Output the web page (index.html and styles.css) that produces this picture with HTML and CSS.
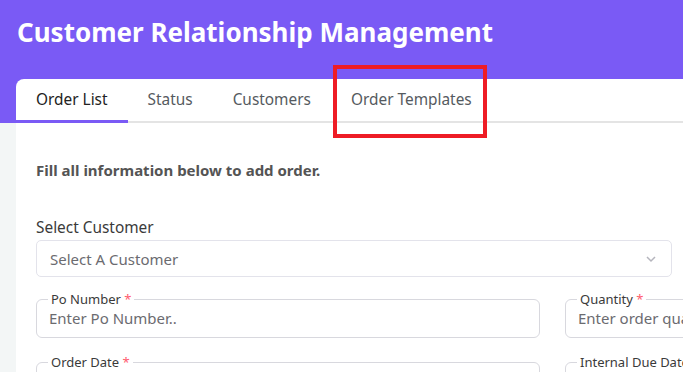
FILE: index.html
```html
<!DOCTYPE html>
<html lang="en">
<head>
    <meta charset="UTF-8">
    <meta name="viewport" content="width=device-width, initial-scale=1.0">
    <title>Customer Relationship Management</title>
    <link rel="stylesheet" href="styles.css">
</head>
<body>
    <h1 class="page-title">Customer Relationship Management</h1>

    <div class="card">
        <ul class="tabs">
            <li class="tab active">Order List</li>
            <li class="tab">Status</li>
            <li class="tab">Customers</li>
            <li class="tab highlight">Order Templates</li>
        </ul>

        <div class="card-body">
            <p class="intro">Fill all information below to add order.</p>

            <label class="label">Select Customer</label>
            <div class="select">
                <span>Select A Customer</span>
                <svg class="chevron" width="12" height="8" viewBox="0 0 12 8">
                    <path d="M2 2l4 4 4-4" fill="none" stroke="#b5b5bd" stroke-width="1.5"/>
                </svg>
            </div>

            <div class="form-grid">
                <fieldset class="field">
                    <legend>Po Number <span class="req">*</span></legend>
                    <input type="text" placeholder="Enter Po Number..">
                </fieldset>
                <fieldset class="field">
                    <legend>Quantity <span class="req">*</span></legend>
                    <input type="text" placeholder="Enter order quantity..">
                </fieldset>
                <fieldset class="field">
                    <legend>Order Date <span class="req">*</span></legend>
                    <input type="text" placeholder="">
                </fieldset>
                <fieldset class="field">
                    <legend>Internal Due Date <span class="req">*</span></legend>
                    <input type="text" placeholder="">
                </fieldset>
            </div>
        </div>
    </div>
</body>
</html>
```

FILE: styles.css
```css
body {
    margin: 0;
    font-family: "Noto Sans", Arial, sans-serif;
    background: linear-gradient(#7a5af5 0 123px, #f3f6f6 123px);
    overflow: hidden;
    height: 372px;
}

.page-title {
    margin: 0;
    padding: 13px 17px 0;
    font-size: 26px;
    line-height: 38px;
    font-weight: 700;
    color: #fff;
}

.card {
    margin: 28px 0 0 16px;
    background: #fff;
    border-top-left-radius: 8px;
    width: 1100px;
    height: 400px;
}

.tabs {
    display: flex;
    list-style: none;
    margin: 0;
    padding: 0;
    border-bottom: 2px solid #e4e4e4;
}

.tab {
    padding: 10px 20px 9px;
    font-size: 15.4px;
    line-height: 22px;
    color: #555a60;
    border-bottom: 3px solid transparent;
    margin-bottom: -2px;
}

.tab.active {
    color: #222;
    border-bottom-color: #7a5af5;
}

/* red box drawn round the tab in the screenshot */
.tab.highlight {
    position: relative;
}

.tab.highlight::after {
    content: '';
    position: absolute;
    left: 2px;
    top: -14px;
    width: 154px;
    height: 73px;
    box-sizing: border-box;
    border: 4px solid #ee1c25;
}

.card-body {
    padding: 37px 20px 0;
}

.intro {
    margin: 0;
    font-size: 15px;
    line-height: 20px;
    font-weight: 700;
    color: #545454;
}

.label {
    display: block;
    margin-top: 38px;
    font-size: 15.4px;
    line-height: 20px;
    color: #3a3a3a;
}

.select {
    margin-top: 2px;
    width: 636px;
    height: 37px;
    box-sizing: border-box;
    border: 1px solid #e3e3eb;
    border-radius: 5px;
    padding: 0 14px 0 13px;
    display: flex;
    align-items: center;
    justify-content: space-between;
    font-size: 15px;
    color: #6b6b70;
}

.form-grid {
    margin-top: 14px;
    display: grid;
    grid-template-columns: 504px 504px;
    column-gap: 25px;
    row-gap: 16px;
}

.field {
    margin: 0;
    padding: 0 12px 9px;
    border: 1px solid #d8d8de;
    border-radius: 6px;
    min-width: 0;
}

.field legend {
    padding: 0 3px;
    margin-left: -1px;
    font-size: 13px;
    line-height: 16px;
    color: #3a3a3a;
}

.req {
    color: #ff5a6e;
}

.field input {
    display: block;
    width: 100%;
    border: none;
    outline: none;
    padding: 0;
    margin-top: 1px;
    font: inherit;
    font-size: 15px;
    line-height: 20px;
    color: #333;
}

.field input::placeholder {
    color: #6b6b70;
}
```
